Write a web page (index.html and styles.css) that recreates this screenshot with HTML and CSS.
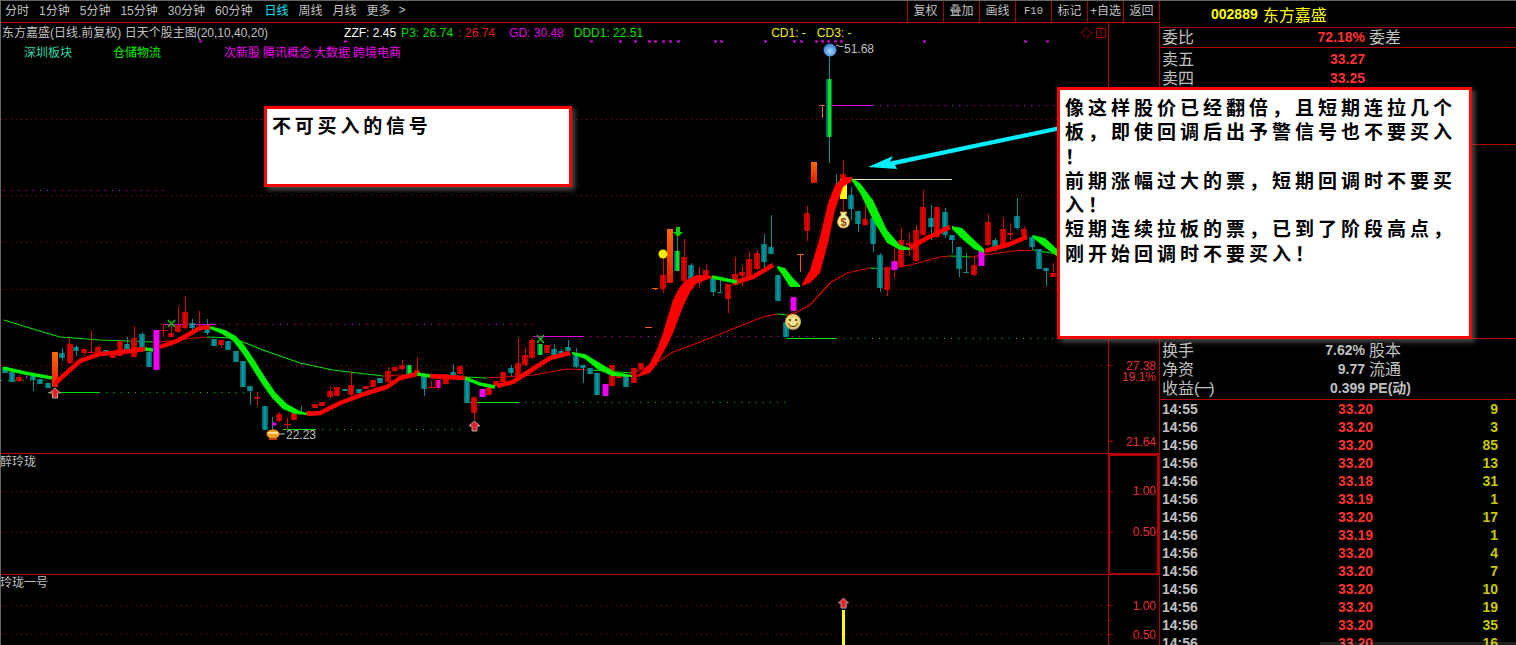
FILE: index.html
```html
<!DOCTYPE html>
<html lang="zh-CN">
<head>
<meta charset="utf-8">
<title>东方嘉盛 日线</title>
<link rel="stylesheet" href="styles.css">
</head>
<body>
<div class="app">
  <main class="main">
    <nav class="toolbar">
      <div class="periods">
        <span>分时</span><span>1分钟</span><span>5分钟</span><span>15分钟</span><span>30分钟</span><span>60分钟</span>
        <span class="active">日线</span><span>周线</span><span>月线</span><span>更多</span><span class="more">&gt;</span>
      </div>
      <div class="tools">
        <span>复权</span><span>叠加</span><span>画线</span><span class="f10">F10</span><span>标记</span><span>+自选</span><span>返回</span>
      </div>
    </nav>
    <section class="chart">
      <div class="legend">
        <div class="legend-row">
          <span class="title">东方嘉盛(日线.前复权) 日天个股主图(20,10,40,20)</span>
          <span class="v-zzf">ZZF: 2.45</span>
          <span class="v-p3">P3: 26.74</span>
          <span class="v-r">: 26.74</span>
          <span class="v-gd">GD: 30.48</span>
          <span class="v-ddd">DDD1: 22.51</span>
          <span class="v-cd1">CD1: -</span>
          <span class="v-cd3">CD3: -</span>
        </div>
        <div class="legend-row tags">
          <span class="t-sz">深圳板块</span>
          <span class="t-cc">仓储物流</span>
          <span class="t-m1">次新股</span>
          <span class="t-m">腾讯概念</span>
          <span class="t-m">大数据</span>
          <span class="t-m">跨境电商</span>
        </div>
      </div>
      <svg class="plot" viewBox="1 23 1158 622" width="1158" height="622" xmlns="http://www.w3.org/2000/svg">
        <defs>
          <linearGradient id="teal"><stop offset="0" stop-color="#005f62"/><stop offset=".5" stop-color="#00a0a4"/><stop offset="1" stop-color="#005f62"/></linearGradient>
          <linearGradient id="red"><stop offset="0" stop-color="#a80000"/><stop offset=".5" stop-color="#f00000"/><stop offset="1" stop-color="#a80000"/></linearGradient>
          <linearGradient id="orange" x2="0" y2="1"><stop offset="0" stop-color="#ff6a00"/><stop offset="1" stop-color="#e81800"/></linearGradient>
          <radialGradient id="ball" cx=".5" cy=".6" r=".6"><stop offset="0" stop-color="#a8e0ff"/><stop offset="1" stop-color="#2f6fd0"/></radialGradient>
          <radialGradient id="smile" cx=".5" cy=".45" r=".55"><stop offset="0" stop-color="#ffeea0"/><stop offset=".8" stop-color="#e8c860"/><stop offset="1" stop-color="#888"/></radialGradient>
        </defs>

        <!-- grid -->
        <path class="grid" d="M1 119.5H1108M1 195.5H1108M1 242.5H1108M1 289.5H1108M1 365.5H1108M1 491.5H1108M1 532.5H1108M1 605.5H1108M1 634.5H1108"/>

        <!-- support / resistance -->
        <path class="dots-m" d="M4 190.5H165M215 324.5H533M583 336.5H820M873 105.5H1058"/>
        <path class="dots-g" d="M1 380.5H50M99 392.5H265M315 429.5H462M518 402.5H786M836 338.5H1058"/>
        <path class="solid-m" d="M163 324.5H215M533 336.5H583M832 105.5H873"/>
        <path class="solid-g" d="M48 392.5H99M283 429.5H315M467 402.5H518M786 338.5H836"/>
        <path class="solid-y" d="M852 179.5H952"/>

        <!-- slow moving average -->
        <path class="ma-g" d="M4 320L33 329L60 337L100 340L153 342M207 337L233 338L263 350L300 363L333 370L383 376M443 375L465 377L487 378M590 370L633 373M777 314L787 315M870 268L885 269M950 256L970 257M1033 250L1057 254"/>
        <path class="ma-r" d="M153 342L160 342L185 339L207 337M383 376L400 375L443 375M487 378L533 375L567 369L590 370M633 373L653 365L673 352L700 342L730 330L763 317L777 314M787 315L797 312L810 305L830 283L847 273L870 268M885 269L910 265L940 257L950 256M970 257L1013 251L1033 250"/>

        <!-- wicks -->
        <path class="wick-t" d="M33.5 376V391M62.5 348V361M76.5 345V356M127.5 337V353M142.5 332V352M192.5 319V331M207.5 319V335M250.5 386V405M301.5 406V414M272.5 417V430M424.5 375V396M453.5 364V376M511.5 365V376M554.5 344V356M561.5 349V355M568.5 340V352M576.5 348V368M583.5 365V383M677.5 237V271M691.5 263V290M713.5 277V296M720.5 280V293M764.5 234V268M771.5 215V254M829.5 55V163M836.5 174V190M851.5 187V220M858.5 211V232M873.5 218V252M880.5 253V292M931.5 205V240M945.5 208V238M952.5 235V253M959.5 247V277M966.5 253V273M995.5 238V252M1017.5 198V230M1032.5 235V250M1046.5 268V286"/>
        <path class="wick-r" d="M19.5 375V382M69.5 338V364M84.5 348V356M91.5 331V356M98.5 345V354M134.5 326V358M163.5 324V337M171.5 325V338M178.5 307V332M185.5 296V330M199.5 311V327M221.5 340V348M257.5 392V406M287.5 418V430M279.5 412V422M330.5 386V398M351.5 371V396M388.5 367V383M402.5 360V371M417.5 357V376M431.5 381V388M438.5 378V390M474.5 397V420M518.5 338V378M525.5 348V366M532.5 338V359M663.5 258V293M684.5 239V282M699.5 267V287M706.5 264V277M728.5 284V313M735.5 257V286M742.5 266V286M749.5 252V279M757.5 250V270M807.5 206V241M843.5 160V211M865.5 205V226M887.5 267V296M894.5 247V278M901.5 228V268M909.5 233V256M916.5 225V262M923.5 190V236M937.5 207V238M974.5 257V276M988.5 214V246M1003.5 218V248M1010.5 223V240M1024.5 226V238M1053.5 263V277M88 352.5H95M158 330.5H168M284 424.5H291M428 387.5H435"/>

        <!-- teal bodies -->
        <g fill="url(#teal)">
          <rect class="b" x="2" y="367" height="6"/><rect class="b" x="9" y="372" height="10"/><rect class="b" x="30" y="376" height="4"/><rect class="b" x="37" y="379" height="5"/><rect class="b" x="45" y="383" height="5"/><rect class="b" x="59" y="353" height="5"/><rect class="b" x="73" y="347" height="4"/><rect class="b" x="103" y="350" height="4"/><rect class="b" x="124" y="344" height="7"/><rect class="b" x="139" y="334" height="16"/><rect class="b" x="146" y="352" height="15"/><rect class="b" x="189" y="323" height="5"/><rect class="b" x="204" y="329" height="4"/><rect class="b" x="211" y="339" height="7"/><rect class="b" x="225" y="341" height="9"/><rect class="b" x="233" y="351" height="11"/><rect class="b" x="240" y="361" height="26"/><rect class="b" x="247" y="386" height="5"/><rect class="b" x="262" y="406" height="24"/><rect class="b" x="342" y="389" height="2"/><rect class="b" x="356" y="389" height="4"/><rect class="b" x="377" y="378" height="5"/><rect class="b" x="406" y="365" height="10"/><rect class="b" x="421" y="375" height="14"/><rect class="b" x="450" y="372" height="3"/><rect class="b" x="464" y="379" height="24"/><rect class="b" x="508" y="368" height="5"/><rect class="b" x="537" y="344" height="11"/><rect class="b" x="551" y="349" height="6"/><rect class="b" x="558" y="351" height="3"/><rect class="b" x="565" y="347" height="4"/><rect class="b" x="573" y="353" height="14"/><rect class="b" x="580" y="365" height="3"/><rect class="b" x="587" y="368" height="6"/><rect class="b" x="594" y="373" height="22"/><rect class="b" x="623" y="376" height="11"/><rect class="b" x="674" y="251" height="20"/><rect class="b" x="688" y="265" height="23"/><rect class="b" x="710" y="277" height="15"/><rect class="b" x="717" y="292" height="1"/><rect class="b" x="761" y="244" height="18"/><rect class="b" x="768" y="247" height="7"/><rect class="b" x="775" y="275" height="26"/><rect class="b" x="783" y="322" height="15"/><rect class="b" x="826" y="79" height="58"/><rect class="b" x="848" y="195" height="14"/><rect class="b" x="855" y="211" height="13"/><rect class="b" x="870" y="218" height="26"/><rect class="b" x="877" y="255" height="33"/><rect class="b" x="928" y="218" height="9"/><rect class="b" x="942" y="212" height="23"/><rect class="b" x="949" y="235" height="5"/><rect class="b" x="956" y="247" height="22"/><rect class="b" x="963" y="272" height="1"/><rect class="b" x="992" y="240" height="10"/><rect class="b" x="1014" y="216" height="12"/><rect class="b" x="1029" y="237" height="10"/><rect class="b" x="1036" y="249" height="20"/><rect class="b" x="1043" y="268" height="3"/>
        </g>

        <!-- red bodies -->
        <g fill="url(#red)">
          <rect class="b" x="16" y="377" height="4"/><rect class="b" x="67" y="344" height="19"/><rect class="b" x="81" y="349" height="4"/><rect class="b" x="95" y="347" height="6"/><rect class="b" x="110" y="354" height="4"/><rect class="b" x="117" y="341" height="15"/><rect class="b" x="131" y="338" height="19"/><rect class="b" x="168" y="333" height="4"/><rect class="b" x="175" y="325" height="7"/><rect class="b" x="182" y="312" height="16"/><rect class="b" x="218" y="340" height="5"/><rect class="b" x="254" y="397" height="2"/><rect class="b" x="276" y="414" height="7"/><rect class="b" x="291" y="412" height="8"/><rect class="b" x="306" y="411" height="2"/><rect class="b" x="312" y="404" height="4"/><rect class="b" x="319" y="402" height="4"/><rect class="b" x="327" y="391" height="6"/><rect class="b" x="334" y="387" height="9"/><rect class="b" x="348" y="385" height="10"/><rect class="b" x="363" y="386" height="3"/><rect class="b" x="370" y="380" height="7"/><rect class="b" x="385" y="371" height="11"/><rect class="b" x="392" y="367" height="4"/><rect class="b" x="399" y="365" height="4"/><rect class="b" x="414" y="370" height="5"/><rect class="b" x="435" y="380" height="8"/><rect class="b" x="443" y="374" height="10"/><rect class="b" x="457" y="366" height="8"/><rect class="b" x="471" y="397" height="16"/><rect class="b" x="486" y="385" height="10"/><rect class="b" x="493" y="381" height="5"/><rect class="b" x="500" y="372" height="10"/><rect class="b" x="515" y="363" height="14"/><rect class="b" x="522" y="355" height="10"/><rect class="b" x="529" y="340" height="18"/><rect class="b" x="544" y="345" height="8"/><rect class="b" x="609" y="365" height="21"/><rect class="b" x="616" y="376" height="2"/><rect class="b" x="631" y="368" height="15"/><rect class="b" x="638" y="363" height="6"/><rect class="b" x="660" y="275" height="14"/><rect class="b" x="681" y="257" height="24"/><rect class="b" x="696" y="275" height="8"/><rect class="b" x="703" y="270" height="6"/><rect class="b" x="725" y="284" height="15"/><rect class="b" x="732" y="274" height="11"/><rect class="b" x="739" y="272" height="4"/><rect class="b" x="746" y="259" height="19"/><rect class="b" x="754" y="253" height="16"/><rect class="b" x="804" y="213" height="18"/><rect class="b" x="840" y="174" height="5"/><rect class="b" x="862" y="219" height="6"/><rect class="b" x="884" y="267" height="23"/><rect class="b" x="898" y="240" height="27"/><rect class="b" x="906" y="243" height="2"/><rect class="b" x="913" y="230" height="31"/><rect class="b" x="920" y="207" height="28"/><rect class="b" x="934" y="207" height="30"/><rect class="b" x="971" y="265" height="10"/><rect class="b" x="985" y="222" height="23"/><rect class="b" x="1000" y="229" height="18"/><rect class="b" x="1007" y="233" height="2"/><rect class="b" x="1021" y="229" height="7"/><rect class="b" x="1050" y="273" height="4"/>
        </g>

        <!-- highlighted bodies -->
        <g fill="url(#orange)">
          <rect class="b" x="52" y="352" height="35"/><rect class="b" x="667" y="229" height="54"/><rect class="b" x="811" y="162" height="21"/>
        </g>
        <path class="hl-m" d="M156.5 330V370M482.5 389V397M605.5 384V396M793.5 297V311M894.5 261V270M981.5 250V266"/>
        <path class="hl-m thin" d="M26 377H27M438.5 380V388M272 424H276"/>
        <path class="hl-g" d="M409.5 365V375M540.5 344V355M677.5 251V271M829.5 79V137"/>
        <rect class="hl-y" x="840" y="179" width="7" height="20"/>

        <!-- fast ribbon -->
        <path class="rib-g" d="M3 368L25 373L52 378M145 349L153 350M417 374L430 376M465 378L480 384L495 387M712 277L737 282"/>
        <path class="rib-r" d="M55 384L62 377L80 361L100 354L123 352L145 349M160 347L177 341L200 328L210 327M307 414L320 413L340 403L367 393L387 387L400 378L417 374M430 376L445 377L465 378M497 386L513 382L533 369L550 358L570 353M737 282L753 277L773 265M910 248L927 238L950 227M985 251L1007 245L1027 237"/>
        <polygon class="fill-g" points="210,326 225,330 236,336 245,346 255,361 265,377 275,392 287,404 300,411 307,413 307,415 295,414 283,409 272,398 262,384 252,368 243,354 233,341 222,334 210,329"/>
        <polygon class="fill-g" points="572,352 585,354 600,363 615,372 632,375 632,377 612,376 597,369 585,359 572,354"/>
        <polygon class="fill-g" points="777,266 785,268 793,278 800,285 800,287 790,287 783,276 777,268"/>
        <polygon class="fill-g" points="852,178 860,183 873,200 887,230 900,245 910,248 910,250 900,250 887,243 873,220 860,193 852,181"/>
        <polygon class="fill-g" points="952,226 962,228 972,238 984,249 984,253 974,249 962,239 952,229"/>
        <polygon class="fill-g" points="1033,235 1045,238 1058,250 1058,257 1047,249 1033,238"/>
        <polygon class="fill-r" points="637,376 650,363 657,349 663,333 668,316 673,300 678,290 683,283 690,278 697,275 712,276 712,278 697,283 690,292 683,307 678,320 673,333 668,344 663,353 657,364 650,373 637,377"/>
        <polygon class="fill-r" points="802,284 810,270 820,237 828,203 835,185 843,177 852,177 852,181 843,187 835,210 828,243 820,273 810,283 802,286"/>

        <!-- signal strip -->
        <path class="strip" d="M199 41.5h3M344 41.5h3M590 41.5h3M619 41.5h3M634 41.5h3M648 41.5h3M654 41.5h3M662 41.5h3M669 41.5h3M677 41.5h3M714 41.5h3M720 41.5h3M764 41.5h3M793 41.5h3M800 41.5h3M815 41.5h3M821 41.5h3M827 41.5h3M834 41.5h3M840 41.5h3M923 41.5h3M1024 41.5h3M1046 41.5h3"/>

        <!-- markers -->
        <circle cx="830" cy="50" r="6.5" fill="url(#ball)"/>
        <path class="tick" d="M836 45L840 46.5H843"/>
        <text class="price" x="844" y="53">51.68</text>
        <path class="tick" d="M279 434H285"/>
        <text class="price" x="286" y="439">22.23</text>
        <circle cx="663" cy="254" r="4.5" fill="#f0f000"/>
        <polygon class="up" points="55,388 60.5,393 57.5,393 57.5,398 52.5,398 52.5,393 49.5,393"/>
        <polygon class="up" points="474.5,421 480,426 477,426 477,431 472,431 472,426 469,426"/>
        <polygon class="up" points="843.5,598 848.5,603 846,603 846,608 841,608 841,603 838.5,603"/>
        <polygon fill="#00d000" points="678,237 683,232 680,232 680,227 676,227 676,232 673,232"/>
        <path class="cross" d="M168 320L175 327M175 320L168 327M537 335L544 343M544 335L537 343"/>
        <path class="t-mark" d="M819 105.5H825M822.5 105V118M797 254.5H804M800.5 254V272M652 288.5H658M655.5 288V290M645 327.5H652"/>
        <rect x="842" y="610" width="3" height="35" fill="#ffff00"/>

        <!-- money bag -->
        <g>
          <path d="M840 212H847L845.5 215C851 218 851 228 843.5 228C836 228 836 218 841.5 215Z" fill="#f8f0b0" stroke="#c89800"/>
          <text class="dollar" x="843.5" y="226" text-anchor="middle">$</text>
        </g>
        <!-- smiley -->
        <g>
          <circle cx="793" cy="322" r="8" fill="url(#smile)"/>
          <circle cx="790" cy="320" r="1" fill="#302000"/><circle cx="796" cy="320" r="1" fill="#302000"/>
          <path d="M788.5 323.5C790 327.5 796 327.5 797.5 323.5" fill="none" stroke="#302000"/>
        </g>
        <!-- pot -->
        <g>
          <ellipse cx="273" cy="434" rx="6.5" ry="4.5" fill="#f0a020"/>
          <path d="M268 433H278" stroke="#fff0c0" stroke-width="1.5"/>
          <path d="M269 439H277" stroke="#c04000" stroke-width="2"/>
        </g>

        <!-- frame -->
        <path class="frame" d="M1108.5 23V645M1 453.5H1159M1 574.5H1159"/>
        <rect class="box" x="1109" y="455" width="49" height="119"/>
        <path class="frame" d="M1108 365.5H1113M1108 441.5H1113M1108 491.5H1113M1108 532.5H1113M1108 605.5H1113M1108 620.5H1111M1108 634.5H1113"/>
        <path class="marker" d="M1086.5 28L1092 33L1086.5 38L1081 33Z"/>
        <path class="marker" d="M1096.5 28.5H1105.5V37.5H1096.5ZM1101 28.5V37.5"/>

        <text class="axis" x="1156" y="370">27.38</text>
        <text class="axis" x="1156" y="381">19.1%</text>
        <text class="axis" x="1156" y="446">21.64</text>
        <text class="axis" x="1156" y="495">1.00</text>
        <text class="axis" x="1156" y="536">0.50</text>
        <text class="axis" x="1156" y="610">1.00</text>
        <text class="axis" x="1156" y="639">0.50</text>
        <text class="pane" x="0" y="466">醉玲珑</text>
        <text class="pane" x="0" y="587">玲珑一号</text>
      </svg>
    </section>
  </main>

  <aside class="side">
    <header class="stock"><b>002889</b><span>东方嘉盛</span></header>
    <div class="row ratio"><span class="lb">委比</span><b class="up-v">72.18%</b><span class="lb">委差</span></div>
    <div class="sell">
      <div class="row"><span class="lb">卖五</span><b class="up-v">33.27</b></div>
      <div class="row"><span class="lb">卖四</span><b class="up-v">33.25</b></div>
    </div>
    <div class="buy"></div>
    <div class="stats">
      <div class="row"><span class="lb">换手</span><b>7.62%</b><span class="lb">股本</span></div>
      <div class="row"><span class="lb">净资</span><b>9.77</b><span class="lb">流通</span></div>
      <div class="row"><span class="lb">收益<span class="tight">(一)</span></span><b>0.399</b><span class="lb pe">PE(动)</span></div>
    </div>
    <div class="trades">
      <div class="trade"><b>14:55</b><b class="up-v">33.20</b><b class="vol">9</b></div>
      <div class="trade"><b>14:56</b><b class="up-v">33.20</b><b class="vol">3</b></div>
      <div class="trade"><b>14:56</b><b class="up-v">33.20</b><b class="vol">85</b></div>
      <div class="trade"><b>14:56</b><b class="up-v">33.20</b><b class="vol">13</b></div>
      <div class="trade"><b>14:56</b><b class="up-v">33.18</b><b class="vol">31</b></div>
      <div class="trade"><b>14:56</b><b class="up-v">33.19</b><b class="vol">1</b></div>
      <div class="trade"><b>14:56</b><b class="up-v">33.20</b><b class="vol">17</b></div>
      <div class="trade"><b>14:56</b><b class="up-v">33.19</b><b class="vol">1</b></div>
      <div class="trade"><b>14:56</b><b class="up-v">33.20</b><b class="vol">4</b></div>
      <div class="trade"><b>14:56</b><b class="up-v">33.20</b><b class="vol">7</b></div>
      <div class="trade"><b>14:56</b><b class="up-v">33.20</b><b class="vol">10</b></div>
      <div class="trade"><b>14:56</b><b class="up-v">33.20</b><b class="vol">19</b></div>
      <div class="trade"><b>14:56</b><b class="up-v">33.20</b><b class="vol">35</b></div>
      <div class="trade"><b>14:56</b><b class="up-v">33.20</b><b class="vol">16</b></div>
    </div>
  </aside>

  <svg class="pointer" viewBox="0 0 200 50" width="200" height="50" xmlns="http://www.w3.org/2000/svg">
    <polygon points="0,41 25,30 22,35.5 192,0 193,4 27,39 29,43" fill="#00f0ff"/>
  </svg>
  <div class="note note-small">不可买入的信号</div>
  <div class="note note-large">像这样股价已经翻倍，且短期连拉几个<br>板，即使回调后出予警信号也不要买入<br>！<br>前期涨幅过大的票，短期回调时不要买<br>入！<br>短期连续拉板的票，已到了阶段高点，<br>刚开始回调时不要买入！</div>
  <div class="strip-bottom"></div>
</div>
</body>
</html>
```

FILE: styles.css
```css
* { box-sizing: border-box; }
html, body { margin: 0; height: 100%; background: #000; }
body { overflow: hidden; font-family: "Liberation Sans", "Noto Sans CJK SC", sans-serif; color: #c0c0c0; }

.app {
  position: relative;
  width: 1516px;
  height: 645px;
  overflow: hidden;
  display: grid;
  grid-template-columns: 1158px 357px;
  border-top: 1px solid #666;
  border-left: 1px solid #666;
  background: #000;
}

.main { display: flex; flex-direction: column; min-width: 0; }

.toolbar {
  flex: none;
  height: 22px;
  display: flex;
  justify-content: space-between;
  border-bottom: 1px solid #c00000;
  font-size: 12px;
  line-height: 21px;
}
.periods { display: flex; gap: 10px; padding-left: 4px; }
.periods .active { color: #00e8f0; margin-left: 2px; }
.periods .more { margin-left: -2px; font-family: "Liberation Mono", monospace; }
.tools { display: flex; }
.tools span { width: 36px; text-align: center; border-left: 1px solid #a00000; white-space: nowrap; }
.tools .f10 { font-family: "Liberation Mono", monospace; font-size: 10.5px; }

.chart { position: relative; flex: 1; min-height: 0; }
.plot { display: block; }

.legend { position: absolute; top: 0; left: 0; right: 0; z-index: 1; font-size: 12px; line-height: 20px; white-space: nowrap; }
.legend-row { display: flex; height: 20px; padding-left: 1px; }
.legend-row.tags { padding-left: 23px; }
.v-zzf { color: #fff; margin-left: 76px; }
.v-p3 { color: #00e000; margin-left: 5px; letter-spacing: .1px; }
.v-r { color: #e02020; margin-left: 5px; }
.v-gd { color: #e000e0; margin-left: 14px; }
.v-ddd { color: #00e000; margin-left: 10px; }
.v-cd1 { color: #f0f000; margin-left: 128px; }
.v-cd3 { color: #f0f000; margin-left: 11px; }
.t-sz { color: #30d8a0; }
.t-cc { color: #00f000; margin-left: 41px; }
.t-m1 { color: #f000f0; margin-left: 63px; }
.t-m { color: #f000f0; margin-left: 3px; }

.grid { fill: none; stroke: #a80000; stroke-dasharray: 1 4; }
.dots-m { fill: none; stroke: #f000f0; stroke-dasharray: 1 6.2; }
.dots-g { fill: none; stroke: #00e000; stroke-dasharray: 1 6.2; }
.solid-m { fill: none; stroke: #e000e0; }
.solid-g { fill: none; stroke: #00e000; }
.solid-y { fill: none; stroke: #e8e8a0; }
.ma-g { fill: none; stroke: #00e000; stroke-width: 1.2; }
.ma-r { fill: none; stroke: #e00000; stroke-width: 1.2; }
.wick-t { fill: none; stroke: #008c90; }
.wick-r { fill: none; stroke: #d80000; }
.b { width: 6px; }
.hl-m { fill: none; stroke: #f000f0; stroke-width: 6; }
.hl-m.thin { stroke-width: 3; }
.hl-g { fill: none; stroke: #00e800; stroke-width: 3; }
.hl-y { fill: #ffff00; }
.rib-g { fill: none; stroke: #00f000; stroke-width: 3.5; }
.rib-r { fill: none; stroke: #ff0000; stroke-width: 4.5; }
.fill-g { fill: #00f000; }
.fill-r { fill: #ff0000; }
.strip { fill: none; stroke: #e000e0; stroke-width: 2; }
.tick { fill: none; stroke: #c0c0c0; }
.price { font-size: 12px; fill: #c0c0c0; }
.up { fill: #f02020; stroke: #b0a0a0; stroke-width: 1; }
.cross { fill: none; stroke: #00c000; stroke-width: 1.5; }
.t-mark { fill: none; stroke: #f06010; }
.dollar { font-size: 11px; font-weight: 700; fill: #a04000; }
.frame { fill: none; stroke: #b00000; }
.box { fill: none; stroke: #b00000; stroke-width: 2; }
.marker { fill: none; stroke: #a80000; }
.axis { font-size: 12px; fill: #e83030; text-anchor: end; }
.pane { font-size: 12px; fill: #c0c0c0; }

.side { display: flex; flex-direction: column; border-left: 1px solid #a80000; min-width: 0; }
.stock { flex: none; height: 27px; padding-left: 51px; display: flex; align-items: center; gap: 5px; color: #ffff00; border-bottom: 1px solid #a80000; font-size: 14px; }
.stock span { font-size: 16px; }

.row {
  display: grid;
  grid-template-columns: 48px 155px 1fr;
  column-gap: 0;
  height: 19px;
  padding-left: 2px;
  font-size: 14px;
  line-height: 19px;
  white-space: nowrap;
}
.row b { text-align: right; }
.lb { font-size: 16px; }
.tight { letter-spacing: -3px; }
.row b + .lb { margin-left: 4px; }
.pe { font-size: 14px; font-weight: 700; }
.up-v { color: #ff3232; }
.ratio { flex: none; height: 20px; border-bottom: 1px solid #a80000; }
.sell { flex: none; height: 97px; padding-top: 2px; border-bottom: 1px solid #a80000; }
.buy { flex: none; height: 194px; border-bottom: 1px solid #a80000; }
.stats { flex: none; height: 61px; padding-top: 2px; border-bottom: 1px solid #a80000; }

.trade {
  display: grid;
  grid-template-columns: 60px 151px 125px;
  height: 18px;
  padding-left: 2px;
  font-size: 14px;
  line-height: 18px;
}
.trade b:nth-child(n+2) { text-align: right; }
.vol { color: #c8c800; }

.note {
  position: absolute;
  z-index: 3;
  background: #fff;
  border: 3px solid #ff0000;
  color: #000;
  font-family: "Noto Sans CJK SC", sans-serif;
  font-size: 19px;
  font-weight: 700;
  letter-spacing: 4px;
  line-height: 24.3px;
  box-shadow: 3px 3px 5px rgba(150, 150, 150, .5);
  white-space: nowrap;
}
.note-small { left: 263px; top: 105px; width: 308px; height: 81px; padding: 4px 0 0 5px; letter-spacing: 3.8px; }
.note-large { left: 1056px; top: 86px; width: 415px; height: 252px; padding: 5px 0 0 5px; }

.pointer { position: absolute; left: 867px; top: 125px; z-index: 2; }
.strip-bottom { position: absolute; left: 1319px; right: 0; bottom: 0; height: 3px; background: rgba(255, 255, 255, .12); z-index: 2; }
```
